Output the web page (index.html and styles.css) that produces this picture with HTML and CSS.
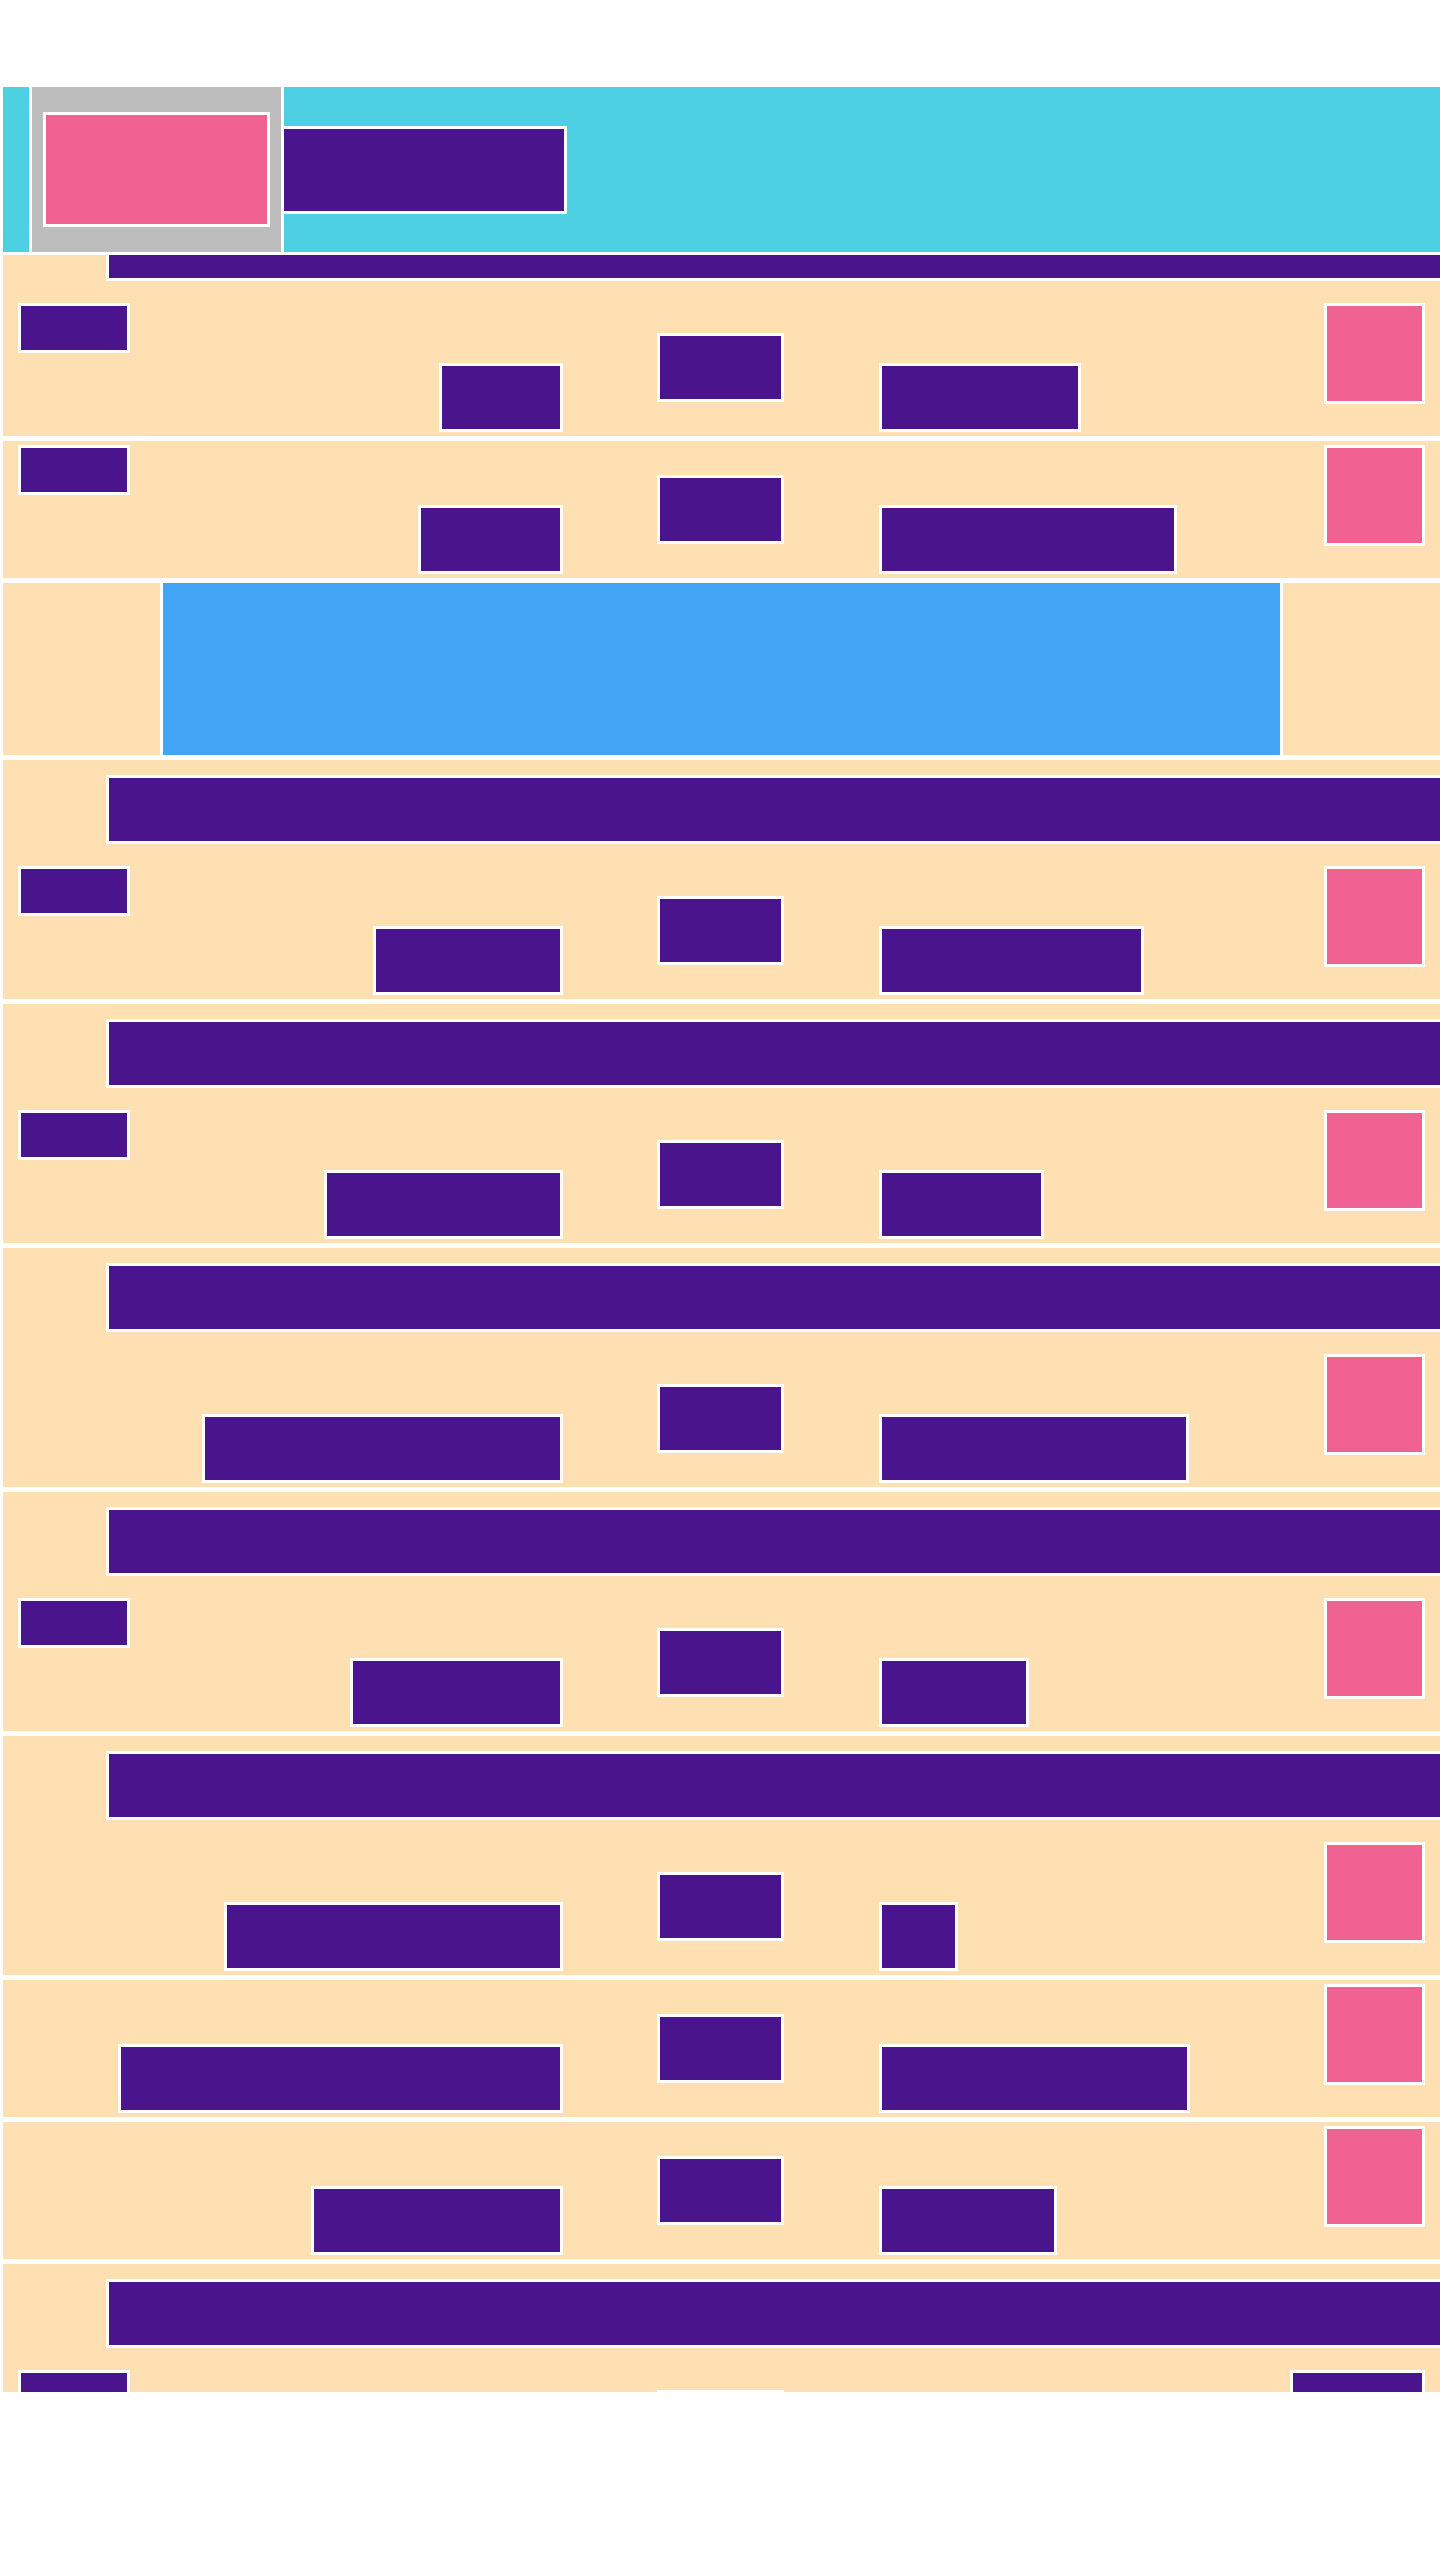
FILE: index.html
```html
<!DOCTYPE html>
<html>
<head>
    <title>Feed</title>
    <link rel="stylesheet" href="styles.css">
</head>
<body>
    <div class="header">
        <div class="hd-side"></div>
        <div class="hd-logo"><div class="logo-box"></div></div>
        <div class="hd-title"></div>
    </div>

    <div class="feed" id="feed">
        <!-- row 1 -->
        <div class="row">
            <div class="row-title"></div>
            <div class="row-body">
                <div class="cell-small"><div class="box small"></div></div>
                <div class="cell-left"><div class="box wide" style="width:124px"></div></div>
                <div class="cell-center"><div class="box mid"></div></div>
                <div class="cell-right"><div class="box wide" style="width:202px"></div></div>
                <div class="cell-end"><div class="box pink"></div></div>
            </div>
        </div>
        <!-- row 2 -->
        <div class="row">
            <div class="row-body">
                <div class="cell-small"><div class="box small"></div></div>
                <div class="cell-left"><div class="box wide" style="width:145px"></div></div>
                <div class="cell-center"><div class="box mid"></div></div>
                <div class="cell-right"><div class="box wide" style="width:298px"></div></div>
                <div class="cell-end"><div class="box pink"></div></div>
            </div>
        </div>
        <!-- banner -->
        <div class="row banner">
            <div class="banner-box"></div>
        </div>
        <!-- row 4 -->
        <div class="row">
            <div class="row-title"></div>
            <div class="row-body">
                <div class="cell-small"><div class="box small"></div></div>
                <div class="cell-left"><div class="box wide" style="width:190px"></div></div>
                <div class="cell-center"><div class="box mid"></div></div>
                <div class="cell-right"><div class="box wide" style="width:265px"></div></div>
                <div class="cell-end"><div class="box pink"></div></div>
            </div>
        </div>
        <!-- row 5 -->
        <div class="row">
            <div class="row-title"></div>
            <div class="row-body">
                <div class="cell-small"><div class="box small"></div></div>
                <div class="cell-left"><div class="box wide" style="width:239px"></div></div>
                <div class="cell-center"><div class="box mid"></div></div>
                <div class="cell-right"><div class="box wide" style="width:165px"></div></div>
                <div class="cell-end"><div class="box pink"></div></div>
            </div>
        </div>
        <!-- row 6 -->
        <div class="row">
            <div class="row-title"></div>
            <div class="row-body">
                <div class="cell-small"></div>
                <div class="cell-left"><div class="box wide" style="width:361px"></div></div>
                <div class="cell-center"><div class="box mid"></div></div>
                <div class="cell-right"><div class="box wide" style="width:310px"></div></div>
                <div class="cell-end"><div class="box pink"></div></div>
            </div>
        </div>
        <!-- row 7 -->
        <div class="row">
            <div class="row-title"></div>
            <div class="row-body">
                <div class="cell-small"><div class="box small"></div></div>
                <div class="cell-left"><div class="box wide" style="width:213px"></div></div>
                <div class="cell-center"><div class="box mid"></div></div>
                <div class="cell-right"><div class="box wide" style="width:150px"></div></div>
                <div class="cell-end"><div class="box pink"></div></div>
            </div>
        </div>
        <!-- row 8 -->
        <div class="row">
            <div class="row-title"></div>
            <div class="row-body">
                <div class="cell-small"></div>
                <div class="cell-left"><div class="box wide" style="width:339px"></div></div>
                <div class="cell-center"><div class="box mid"></div></div>
                <div class="cell-right"><div class="box wide" style="width:79px"></div></div>
                <div class="cell-end"><div class="box pink"></div></div>
            </div>
        </div>
        <!-- row 9 -->
        <div class="row">
            <div class="row-body">
                <div class="cell-small"></div>
                <div class="cell-left"><div class="box wide" style="width:445px"></div></div>
                <div class="cell-center"><div class="box mid"></div></div>
                <div class="cell-right"><div class="box wide" style="width:311px"></div></div>
                <div class="cell-end"><div class="box pink"></div></div>
            </div>
        </div>
        <!-- row 10 -->
        <div class="row">
            <div class="row-body">
                <div class="cell-small"></div>
                <div class="cell-left"><div class="box wide" style="width:252px"></div></div>
                <div class="cell-center"><div class="box mid"></div></div>
                <div class="cell-right"><div class="box wide" style="width:178px"></div></div>
                <div class="cell-end"><div class="box pink"></div></div>
            </div>
        </div>
        <!-- row 11 -->
        <div class="row">
            <div class="row-title"></div>
            <div class="row-body">
                <div class="cell-small"><div class="box small"></div></div>
                <div class="cell-left"></div>
                <div class="cell-center up"><div class="box mid"></div></div>
                <div class="cell-right"></div>
                <div class="cell-end"><div class="box action"></div></div>
            </div>
        </div>
    </div>

    <script>
        // feed is scrolled a little under the header
        const feed = document.getElementById("feed");
        feed.scrollTop = 58;
    </script>
</body>
</html>
```

FILE: styles.css
```css
* {
    box-sizing: border-box;
}

body {
    margin: 0;
    padding: 87px 0 0 3px;
    background-color: #fff;
    font-family: "Liberation Sans", Arial, sans-serif;
}

/* header */
.header {
    display: flex;
    align-items: center;
    height: 165px;
    margin-bottom: 3px;
    background-color: #4DD0E1;
}

.hd-side {
    width: 29px;
    height: 100%;
    border-right: 3px solid #fff;
}

.hd-logo {
    width: 252px;
    height: 100%;
    padding: 25px 11px;
    background-color: #BDBDBD;
    background-clip: padding-box;
    border-right: 3px solid #fff;
}

.logo-box {
    height: 100%;
    background-color: #F06292;
    border: 3px solid #fff;
}

.hd-title {
    width: 283px;
    height: 88px;
    background-color: #4A148C;
    border: 3px solid #fff;
    border-left: none;
}

/* feed */
.feed {
    height: 2137px;
    overflow: hidden;
    display: flex;
    flex-direction: column;
    gap: 5px;
}

.row {
    flex-shrink: 0;
    background-color: #FFE0B2;
}

.row-title {
    height: 69px;
    margin: 15px 0 18px 103px;
    background-color: #4A148C;
    border: 3px solid #fff;
    border-right: none;
}

.row-body {
    display: flex;
    height: 137px;
    padding: 4px 15px;
}

.row-body > div {
    flex-shrink: 0;
}

.cell-small {
    width: 112px;
}

.cell-left {
    width: 433px;
    display: flex;
    justify-content: flex-end;
    align-items: flex-start;
    padding-top: 60px;
}

.cell-center {
    width: 127px;
    margin-left: 94px;
    padding-top: 30px;
}

.cell-center.up {
    padding-top: 20px;
}

.row-body > .cell-right {
    width: 445px;
    min-width: 0;
    margin-left: 95px;
    padding-top: 60px;
    flex-shrink: 1;
}

.cell-end {
    margin-left: auto;
    display: flex;
    justify-content: flex-end;
    align-items: flex-start;
}

/* boxes */
.box {
    flex-shrink: 0;
    background-color: #4A148C;
    border: 3px solid #fff;
}

.small {
    width: 112px;
    height: 50px;
}

.mid {
    width: 127px;
    height: 69px;
}

.wide {
    height: 69px;
}

.pink {
    width: 101px;
    height: 101px;
    background-color: #F06292;
}

.action {
    width: 135px;
    height: 69px;
}

/* banner row */
.banner {
    height: 172px;
    display: flex;
    justify-content: center;
}

.banner-box {
    width: 1123px;
    background-color: #42A5F5;
    border-left: 3px solid #fff;
    border-right: 3px solid #fff;
}
```
